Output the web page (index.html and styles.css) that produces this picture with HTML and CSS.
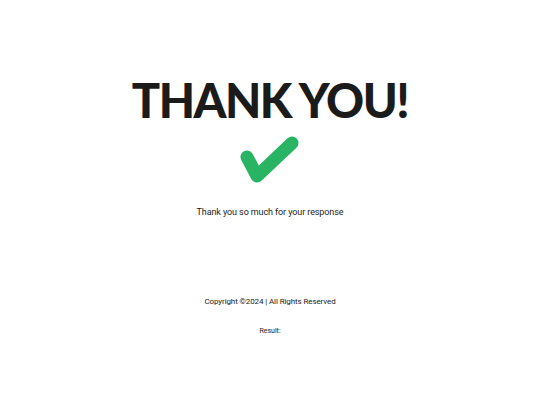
FILE: index.html
```html
<!DOCTYPE html>
<html>
<head>
<meta charset="utf-8">
<link rel="stylesheet" href="styles.css">
</head>
<body>
<main class="page">
  <h1 class="title">THANK YOU!</h1>
  <svg class="check" width="60" height="50" viewBox="0 0 60 50">
    <path d="M7 21 L17 40 L52 7" fill="none" stroke="#28b463" stroke-width="13" stroke-linecap="round" stroke-linejoin="round"/>
  </svg>
  <p class="message">Thank you so much for your response</p>
  <p class="copyright">Copyright ©2024 | All Rights Reserved</p>
  <p class="result">Result:</p>
</main>
</body>
</html>
```
FILE: styles.css
```css
html, body {
  margin: 0;
  padding: 0;
  background: #ffffff;
}
.page {
  display: flex;
  flex-direction: column;
  align-items: center;
  padding-top: 74px;
  font-family: Roboto, "Liberation Sans", sans-serif;
  color: #222;
}
.title {
  margin: 0;
  font-family: Lato, "Liberation Sans", sans-serif;
  font-weight: 900;
  font-size: 47px;
  line-height: 52px;
  color: #1b1b1b;
  letter-spacing: -1.5px;
}
.check {
  display: block;
  margin-top: 10px;
}
.message {
  margin: 20px 0 0;
  font-size: 9px;
  line-height: 12px;
  letter-spacing: -0.1px;
}
.copyright {
  margin: 79px 0 0;
  font-size: 8px;
  line-height: 10px;
  letter-spacing: -0.1px;
}
.result {
  margin: 20px 0 0;
  font-size: 7px;
  line-height: 9px;
}
```
